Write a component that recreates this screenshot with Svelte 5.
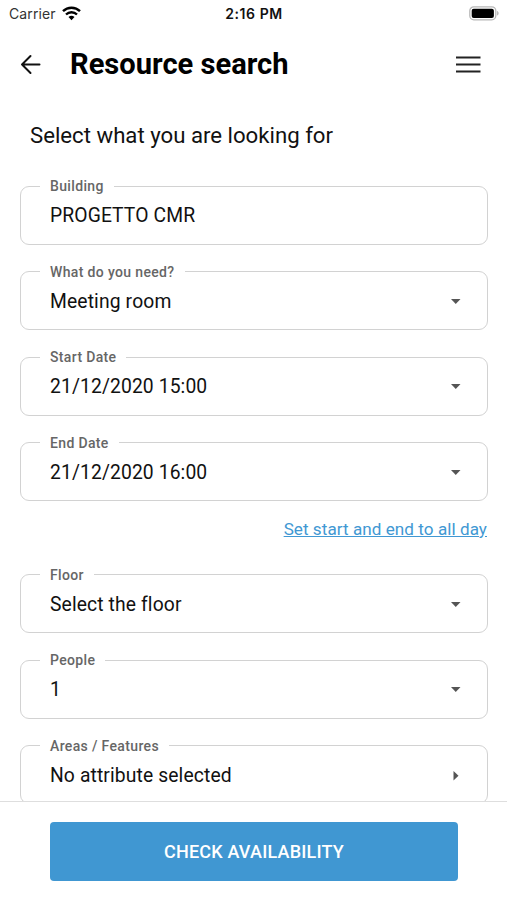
<script>
  let building = "PROGETTO CMR";
  let attributes = "No attribute selected";

  let startDate = "21/12/2020 15:00";
  let endDate = "21/12/2020 16:00";

  $: schedule = [
    { label: "Building", value: building, icon: null },
    { label: "What do you need?", value: "Meeting room", icon: "down" },
    { label: "Start Date", value: startDate, icon: "down" },
    { label: "End Date", value: endDate, icon: "down" }
  ];

  $: filters = [
    { label: "Floor", value: "Select the floor", icon: "down" },
    { label: "People", value: "1", icon: "down" },
    { label: "Areas / Features", value: attributes, icon: "right" }
  ];

  function setAllDay() {
    startDate = "21/12/2020 00:00";
    endDate = "21/12/2020 23:59";
  }
</script>

<style>
  :global(body) {
    background: #fff;
  }

  .screen {
    height: 900px;
    display: flex;
    flex-direction: column;
    overflow: hidden;
    background: #fff;
    color: #111;
    font-family: Roboto, "Liberation Sans", sans-serif;
  }

  button {
    padding: 0;
    border: none;
    background: none;
    color: inherit;
    font: inherit;
    cursor: pointer;
  }

  svg {
    display: block;
  }

  .status-bar {
    flex: none;
    height: 27px;
    display: grid;
    grid-template-columns: 1fr auto 1fr;
    align-items: center;
    padding: 0 8px 0 9px;
    box-sizing: border-box;
    font-family: Inter, sans-serif;
    font-size: 14px;
  }

  .carrier {
    display: flex;
    align-items: center;
    gap: 6px;
    letter-spacing: 0.1px;
    color: #333;
  }

  .time {
    font-weight: 600;
    font-size: 14px;
    letter-spacing: 0.55px;
    color: #111;
  }

  .battery {
    justify-self: end;
  }

  .header {
    flex: none;
    height: 74px;
    display: flex;
    align-items: center;
    padding: 0 26px 0 20px;
    box-sizing: border-box;
  }

  .title {
    flex: 1;
    margin: 0 0 0 28px;
    font-size: 29.1px;
    font-weight: 700;
    line-height: 34px;
    color: #000;
  }

  .content {
    flex: 1;
    min-height: 0;
    overflow: hidden;
    padding: 0 19px 0 20px;
  }

  .subtitle {
    margin: 20px 10px 28px;
    font-size: 22.2px;
    font-weight: 400;
    line-height: 28px;
  }

  .field {
    display: flex;
    align-items: center;
    justify-content: space-between;
    width: 468px;
    height: 67.5px;
    margin: 0 0 18px;
    padding: 0 26px 6px 19px;
    box-sizing: border-box;
    border: 1px solid #d2d2d2;
    border-radius: 9px;
    min-inline-size: 0;
  }

  .field legend {
    height: 18px;
    padding: 0 10px;
    font-size: 14px;
    font-weight: 500;
    line-height: 18px;
    letter-spacing: 0.35px;
    color: #666;
  }

  .value {
    padding-left: 10px;
    font-size: 19.3px;
    line-height: 24px;
    letter-spacing: 0.12px;
    font-kerning: none;
  }

  .all-day {
    display: flex;
    justify-content: flex-end;
    height: 46.5px;
    padding-right: 1px;
  }

  .all-day button {
    height: 20px;
    font-size: 17.1px;
    line-height: 20px;
    letter-spacing: 0.05px;
    color: #4198d3;
    text-decoration: underline;
  }

  .footer {
    flex: none;
    height: 99px;
    padding: 20px 49px 0 50px;
    box-sizing: border-box;
    border-top: 1px solid #dedede;
    background: #fff;
  }

  .check-button {
    width: 100%;
    height: 59px;
    border-radius: 4px;
    background: #4097d2;
    color: #fff;
    font-size: 18px;
    font-weight: 500;
    letter-spacing: 0.2px;
  }
</style>

<div class="screen">
  <div class="status-bar">
    <div class="carrier">
      <span>Carrier</span>
      <svg width="19" height="15" viewBox="0 0 19 15" fill="none" stroke="#000" stroke-width="2.4">
        <path d="M1 5.2a12.2 12.2 0 0 1 17 0" />
        <path d="M4 8.5a7.9 7.9 0 0 1 11 0" />
        <path d="M6.5 11.1a4.3 4.3 0 0 1 6 0L9.5 14.2z" fill="#000" stroke="none" />
      </svg>
    </div>
    <div class="time">2:16 PM</div>
    <svg class="battery" width="31" height="15" viewBox="0 0 31 15">
      <rect x="1.8" y="0.8" width="26" height="13" rx="4" fill="#fff" stroke="#b8b8b8" stroke-width="1.3" />
      <rect x="3.7" y="2.7" width="22.2" height="9.2" rx="2" fill="#000" />
      <path d="M29.2 5v4.6c1.800-.6 1.800-4 0-4.600z" fill="#aaa" />
    </svg>
  </div>

  <header class="header">
    <button type="button" aria-label="Back">
      <svg width="22" height="22" viewBox="0 0 22 22" fill="none" stroke="#111" stroke-width="2" stroke-linecap="round" stroke-linejoin="round">
        <path d="M10.500 3L2 11.500l8.500 8.500M2 11.500h17.500" />
      </svg>
    </button>
    <h1 class="title">Resource search</h1>
    <button type="button" aria-label="Menu">
      <svg width="25" height="20" viewBox="0 0 25 20" stroke="#222" stroke-width="1.800">
        <path d="M0 3.500h24.500M0 10.500h24.500M0 17.500h24.500" />
      </svg>
    </button>
  </header>

  <main class="content">
    <h2 class="subtitle">Select what you are looking for</h2>

    {#each schedule as field}
      <fieldset class="field">
        <legend>{field.label}</legend>
        <span class="value">{field.value}</span>
        {#if field.icon === "down"}
          <svg width="10" height="6" viewBox="0 0 10 6"><path d="M0 0h9.500L4.750 5z" fill="#555" /></svg>
        {/if}
      </fieldset>
    {/each}

    <div class="all-day">
      <button type="button" on:click={setAllDay}>Set start and end to all day</button>
    </div>

    {#each filters as field}
      <fieldset class="field">
        <legend>{field.label}</legend>
        <span class="value">{field.value}</span>
        {#if field.icon === "down"}
          <svg width="10" height="6" viewBox="0 0 10 6"><path d="M0 0h9.500L4.750 5z" fill="#555" /></svg>
        {:else}
          <svg width="10" height="10" viewBox="0 0 10 10"><path d="M2.500 0v9.500L7.500 4.750z" fill="#555" /></svg>
        {/if}
      </fieldset>
    {/each}
  </main>

  <footer class="footer">
    <button class="check-button" type="button">CHECK AVAILABILITY</button>
  </footer>
</div>
